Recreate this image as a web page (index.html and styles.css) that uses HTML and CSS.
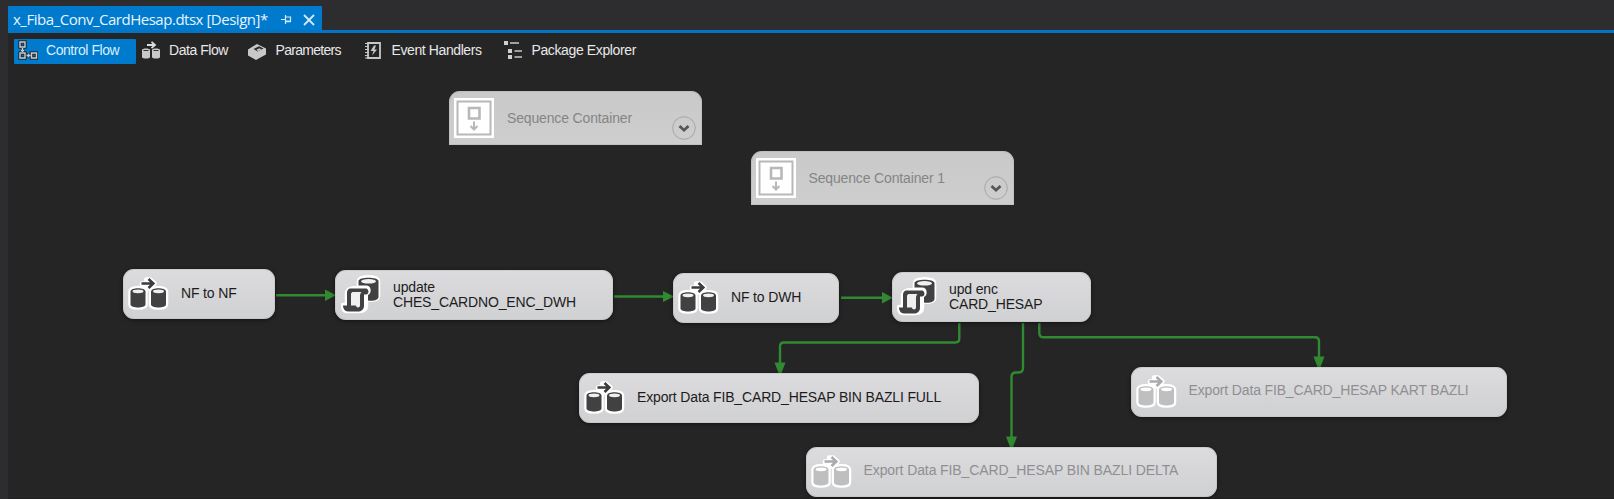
FILE: index.html
```html
<!DOCTYPE html>
<html lang="en">
<head>
<meta charset="utf-8">
<title>x_Fiba_Conv_CardHesap.dtsx [Design]*</title>
<link rel="stylesheet" href="styles.css">
</head>
<body>
<svg class="defs" aria-hidden="true">
  <defs>
    <g id="flow-shape">
      <path d="M11 6.500H18L15 2.500H19L23.500 6.500L19 11.500H15L18 8H11Z"/>
      <path d="M-0.500 14.500C-0.500 10 14.500 10 14.500 14.500V27.500C14.500 31.500 -0.500 31.500 -0.500 27.500Z"/>
      <path d="M20 14.500C20 10 35 10 35 14.500V27.500C35 31.500 20 31.500 20 27.500Z"/>
    </g>
    <symbol id="data-flow" viewBox="-3 -1 42 36">
      <use href="#flow-shape" class="halo"/>
      <path class="line" d="M10.500 6.500H22M17.500 2L22.300 6.500L17.500 11"/>
      <path class="ink" d="M-0.500 14.500C-0.500 10 14.500 10 14.500 14.500V27.500C14.500 31.500 -0.500 31.500 -0.500 27.500Z"/>
      <path class="ink" d="M20 14.500C20 10 35 10 35 14.500V27.500C35 31.500 20 31.500 20 27.500Z"/>
      <ellipse class="lid" cx="7" cy="14.300" rx="5.500" ry="1.900"/>
      <ellipse class="lid" cx="27.500" cy="14.300" rx="5.500" ry="1.900"/>
    </symbol>
    <symbol id="sql" viewBox="0 0 42 42">
      <path class="halo" d="M18 7C18 2 37 2 37 7V22C37 26 28 27 25 24V31C25 36 21 37 18 37H6C3 37 2 34 2 31H6V20C6 15 10 14 18 14Z"/>
      <path class="ink" d="M17.500 7C17.500 2.500 37.500 2.500 37.500 7V23C37.500 26 32 27.500 27 26.500V18L23 12H17.500Z"/>
      <ellipse class="lid" cx="27.500" cy="7.300" rx="7.500" ry="2.300"/>
      <path class="gap" d="M16 13H25C29 13 29.500 20 25 20V24"/>
      <path class="ink" d="M10 14.500H24C28.500 14.500 28.500 20.500 25 20.500H23V32C23 35.500 20 37.500 17 37.500H7C4 37.500 2 34.500 2 31.500H6V19.500C6 16.500 7 14.500 10 14.500Z"/>
      <path class="paper" d="M11.500 18H20.500C19.500 19 19 20.500 19 21.500V31.500C19 34 15 34 15 31.500H10V20.500C10 19 10.500 18.500 11.500 18Z"/>
    </symbol>
    <symbol id="sequence" viewBox="0 0 40 40">
      <path fill="#fff" d="M0 0H40V40H0Z"/>
      <path fill="none" stroke="#b8b8b8" stroke-width="2" d="M3.500 3.500H36.500V36.500H3.500Z"/>
      <path fill="none" stroke="#b8b8b8" stroke-width="2.600" d="M15 10H25.500V20.500H15Z"/>
      <path fill="none" stroke="#b8b8b8" stroke-width="2" d="M20 23.500V31M16.500 28L20 31.500L23.500 28"/>
    </symbol>
    <symbol id="expand" viewBox="0 0 24 24">
      <circle cx="12" cy="12" r="11.300" fill="none" stroke="#a6a6a6"/>
      <path d="M7.500 10L12 14.200L16.500 10" fill="none" stroke="#555" stroke-width="2.800"/>
    </symbol>
  </defs>
</svg>

<div class="window">
  <header class="titlebar">
    <div class="doc-tab">
      <span class="doc-name">x_Fiba_Conv_CardHesap.dtsx [Design]*</span>
      <svg class="pin" viewBox="0 0 11 9"><path d="M0 4.500H4M4.500 0V9M4.500 2H9.500V6H4.500M4.500 6.700H10" /></svg>
      <svg class="close" viewBox="0 0 12 12"><path d="M1 1L11 11M11 1L1 11"/></svg>
    </div>
  </header>
  <nav class="tabs">
    <div class="tab tab-control active">
      <svg class="i-control" viewBox="0 0 20 20"><path class="edge" d="M2 2H7V7H2ZM2 13H7V18H2ZM13.500 13H18.500V18H13.500ZM4.500 8V12M8 15.500H12.500"/><path class="core" d="M2 2H7V7H2ZM2 13H7V18H2ZM13.500 13H18.500V18H13.500ZM4.500 8V12M3 10.500H6M8.500 15.500H12.500M10.500 14V17"/></svg>
      <span>Control Flow</span>
    </div>
    <div class="tab tab-data">
      <svg class="i-data" viewBox="0 0 19 18"><path fill="#c8c8c8" d="M0 9C0 7 8 7 8 9V16C8 18 0 18 0 16ZM10 9C10 7 18 7 18 9V16C18 18 10 18 10 16Z"/><path d="M1.500 9.500H6.500M11.500 9.500H16.500" stroke="#333"/><path d="M5 4H13M9.500 0.800L13 4L9.500 7.200" fill="none" stroke="#ddd" stroke-width="1.800"/></svg>
      <span>Data Flow</span>
    </div>
    <div class="tab tab-params">
      <svg class="i-params" viewBox="0 0 18 16"><path fill="#c8c8c8" d="M0 5.500L9 0L18 4.500V10.500L8 16L0 11.500Z"/><path fill="#2b2b2b" d="M5.500 5L11 2.200L15.500 4.600L9.500 7.500Z"/><path fill="#c8c8c8" d="M8.500 5.800L11.500 4.300L13.500 5.400L9.700 7.200Z"/></svg>
      <span>Parameters</span>
    </div>
    <div class="tab tab-events">
      <svg class="i-events" viewBox="0 0 16 17"><path d="M3 1H15V16H3Z" fill="none" stroke="#c8c8c8" stroke-width="1.800"/><path d="M0 1.500H4M0 4.500H4M0 7.500H4M0 10.500H4M0 13.500H4M0 16H4" stroke="#c8c8c8"/><path d="M9 3.500L5.500 9H8.500L7 13.500L12 7.500H9.500L11 3.500Z" fill="#c8c8c8"/></svg>
      <span>Event Handlers</span>
    </div>
    <div class="tab tab-explorer">
      <svg class="i-explorer" viewBox="0 0 18 18"><path fill="#d0d0d0" d="M0 0H4V4H0ZM4 8H8V12H4ZM4 14H8V18H4Z"/><path stroke="#c8c8c8" stroke-width="1.300" d="M6 2H15M10.500 10H18M10.500 16H18"/></svg>
      <span>Package Explorer</span>
    </div>
  </nav>
  <main class="canvas"></main>
</div>

<svg class="links" viewBox="0 0 1614 499">
  <g class="wire">
    <path d="M276 295.200H328"/>
    <path d="M614 296.500H666"/>
    <path d="M841 297.700H885"/>
    <path d="M959.300 323V338.500Q959.300 342.500 955.300 342.500H784Q780 342.500 780 346.500V365"/>
    <path d="M1023 323V368Q1023 372.500 1018.500 372.500H1016Q1011.500 372.500 1011.500 377V438"/>
    <path d="M1039.300 323V333Q1039.300 337.300 1043.500 337.300H1315Q1319 337.300 1319 341.500V358"/>
  </g>
  <g class="tips">
    <path d="M325 289.500L336 295.200L325 301Z"/>
    <path d="M663 291L674 296.500L663 302Z"/>
    <path d="M882 292L893 297.700L882 303.500Z"/>
    <path d="M774.500 362.500H785.500L781.500 373H778.500Z"/>
    <path d="M1006 436.500H1017L1013 447H1010Z"/>
    <path d="M1313.500 356.500H1324.500L1320.500 367H1317.500Z"/>
  </g>
</svg>

<section class="box seq seq-a"><svg class="seq-icon"><use href="#sequence"/></svg><span>Sequence Container</span><svg class="expand"><use href="#expand"/></svg></section>
<section class="box seq seq-b"><svg class="seq-icon"><use href="#sequence"/></svg><span>Sequence Container 1</span><svg class="expand"><use href="#expand"/></svg></section>
<section class="box task nf-nf"><svg class="flow"><use href="#data-flow"/></svg><span>NF to NF</span></section>
<section class="box task update"><svg class="script"><use href="#sql"/></svg><span>update<br>CHES_CARDNO_ENC_DWH</span></section>
<section class="box task nf-dwh"><svg class="flow"><use href="#data-flow"/></svg><span>NF to DWH</span></section>
<section class="box task upd-enc"><svg class="script"><use href="#sql"/></svg><span>upd enc<br>CARD_HESAP</span></section>
<section class="box task full"><svg class="flow"><use href="#data-flow"/></svg><span>Export Data FIB_CARD_HESAP BIN BAZLI FULL</span></section>
<section class="box task off delta"><svg class="flow"><use href="#data-flow"/></svg><span>Export Data FIB_CARD_HESAP BIN BAZLI DELTA</span></section>
<section class="box task off kart"><svg class="flow"><use href="#data-flow"/></svg><span>Export Data FIB_CARD_HESAP KART BAZLI</span></section>
</body>
</html>
```
FILE: styles.css
```css
* { box-sizing: border-box; }
body {
  margin: 0;
  width: 1614px;
  height: 499px;
  position: relative;
  overflow: hidden;
  background: #2d2d30;
  font-family: "Liberation Sans", Arial, sans-serif;
  font-size: 14px;
  letter-spacing: -0.15px;
}
svg { display: block; flex: none; }
.defs { position: absolute; width: 0; height: 0; }

.window { height: 499px; padding-left: 8px; display: flex; flex-direction: column; }
.titlebar { height: 33px; padding-top: 6px; border-bottom: 3px solid #0474c4; flex: none; }
.doc-tab {
  width: 313.5px;
  height: 24px;
  padding-left: 5px;
  display: flex;
  align-items: center;
  background: #007acc;
  color: #e8f4fc;
}
.doc-name {
  width: 268px;
  white-space: nowrap;
  font: 15px/24px "Open Sans", "Noto Sans", sans-serif;
  letter-spacing: -0.48px;
  padding-top: 2px;
}
.pin { width: 11px; height: 9px; margin-top: 3px; }
.pin path { fill: none; stroke: #d4e9f7; stroke-width: 1.2; }
.close { width: 12px; height: 12px; margin: 4px 0 0 11px; }
.close path { stroke: #d4e9f7; stroke-width: 1.8; }

.tabs {
  display: flex;
  height: 31px;
  padding: 6px 0 0 6px;
  background: #252526;
  color: #e8e8e8;
  letter-spacing: -0.45px;
}
.tab { height: 25px; display: flex; align-items: center; padding-bottom: 3px; white-space: nowrap; }
.active { background: #007acc; color: #d8eeff; border-radius: 1px; }
.tab-control { width: 121.5px; padding-left: 4px; gap: 8px; }
.tab-data { width: 112px; padding-left: 6px; gap: 8.5px; }
.tab-params { width: 117px; gap: 10px; letter-spacing: -0.7px; }
.tab-events { width: 139px; gap: 11px; letter-spacing: -0.4px; }
.tab-explorer { gap: 10px; letter-spacing: -0.38px; }
.i-control { width: 20px; height: 20px; }
.i-control .edge { fill: none; stroke: #1d2b36; stroke-width: 3.5; }
.i-control .core { fill: none; stroke: #ccc; stroke-width: 1.4; }
.i-data { width: 19px; height: 18px; }
.i-params { width: 18px; height: 16px; margin-top: 3px; }
.i-events { width: 16px; height: 17px; }
.i-explorer { width: 18px; height: 18px; }

.canvas { flex: 1; background: #252526; border-bottom: 1px solid #202021; }

.links { position: absolute; left: 0; top: 0; width: 1614px; height: 499px; }
.wire { fill: none; stroke: #318a31; stroke-width: 2.4; }
.tips { fill: #318a31; }

.box { position: absolute; display: flex; align-items: center; white-space: nowrap; }
.task {
  --ink: #414141;
  --arrow: #3c3c3c;
  --lid: #f0f0f0;
  height: 50px;
  padding-left: 5px;
  border-radius: 11px;
  background: linear-gradient(#dcdbde, #d0d1d3);
  box-shadow: inset 0 0 0 1px rgba(190, 190, 192, .5), 0 1px 4px rgba(0, 0, 0, .5);
  color: #1c1c1c;
  line-height: 15px;
}
.flow { width: 42px; height: 36px; margin-right: 11px; }
.flow + span { padding-bottom: 1.5px; }
.script { width: 42px; height: 42px; margin-right: 10px; }
.halo { fill: #fff; stroke: #fff; stroke-width: 4.5; stroke-linejoin: round; }
.line { fill: none; stroke: var(--arrow); stroke-width: 2.6; }
.ink { fill: var(--ink); }
.lid, .paper { fill: var(--lid); }
.gap { fill: none; stroke: #fff; stroke-width: 3; }
.off { --ink: #bfbfbf; --arrow: #ababab; --lid: #fff; color: #8f8f91; }

.seq {
  height: 54px;
  padding-left: 5px;
  border-radius: 11px 11px 0 0;
  background: linear-gradient(#c9c9c9, #cecece);
  box-shadow: inset 0 0 0 1px rgba(180, 180, 180, .5);
  color: #858585;
}
.seq-icon { width: 40px; height: 40px; margin-right: 13px; }
.seq .expand { position: absolute; right: 6px; bottom: 5px; width: 24px; height: 24px; }

.seq-a { left: 449px; top: 91px; width: 253px; }
.seq-b { left: 750.5px; top: 151px; width: 263.5px; }
.nf-nf { left: 123px; top: 269px; width: 152px; }
.update { left: 335px; top: 270px; width: 278px; padding-left: 6px; }
.nf-dwh { left: 673px; top: 273px; width: 166px; }
.upd-enc { left: 892px; top: 271.5px; width: 199px; }
.full { left: 579px; top: 373px; width: 400px; }
.delta { left: 805.5px; top: 446.5px; width: 411.5px; letter-spacing: -0.1px; }
.kart { left: 1130.5px; top: 366.5px; width: 376.5px; }
```
